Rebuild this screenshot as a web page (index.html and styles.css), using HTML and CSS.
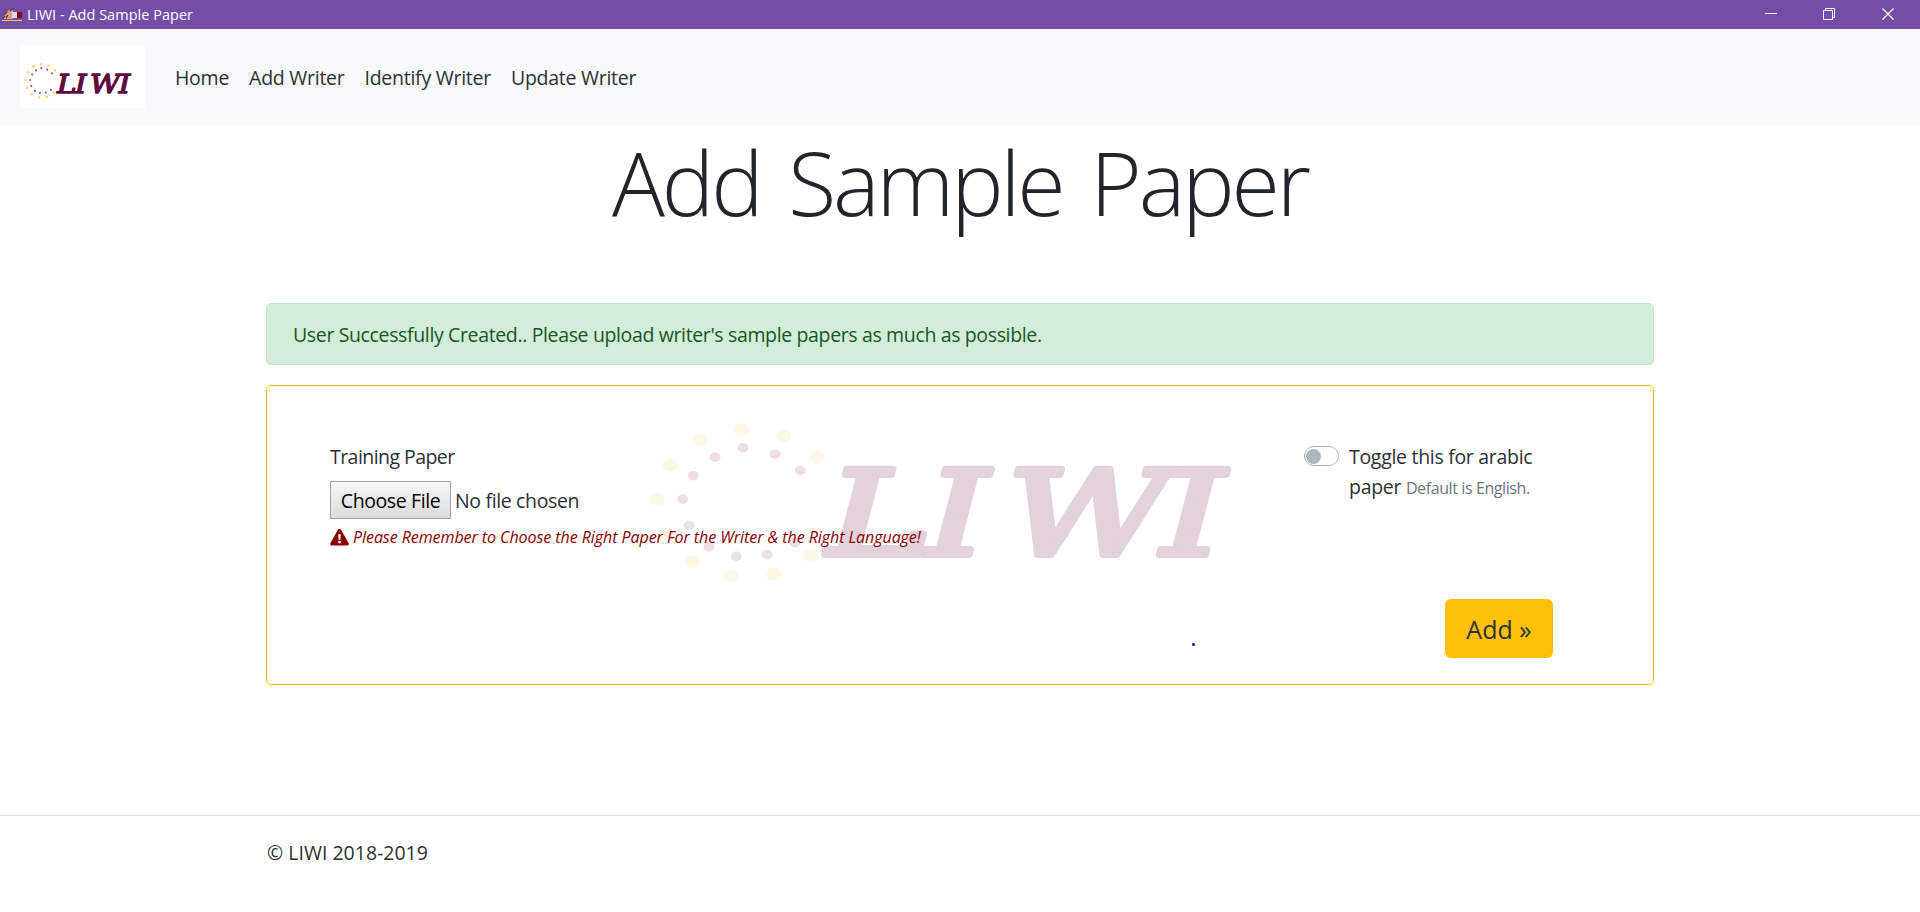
FILE: index.html
```html
<!DOCTYPE html>
<html lang="en">
<head>
<meta charset="utf-8">
<title>LIWI - Add Sample Paper</title>
<link rel="stylesheet" href="styles.css">
</head>
<body>
<header class="titlebar">
  <svg class="app-icon" width="20" height="14" viewBox="0 0 20 14">
    <path d="M1 9L4 5L7 2H11V11H2Z" fill="#e8a07c"/>
    <path d="M0 11L3 8M2 7L5 4M8 3L12 0M4 10L6 7" stroke="#4a4450" stroke-width="1.4"/>
    <path d="M10 4H15V10H10Z" fill="#dcd8ea"/>
    <path d="M15 4H20V10H15Z" fill="#7d0a12"/>
    <path d="M0 12H20V13H0Z" fill="#f5c842"/>
  </svg>
  <span class="window-title">LIWI - Add Sample Paper</span>
  <svg class="window-controls" width="150" height="29" viewBox="0 0 150 29" fill="none" stroke="#fff">
    <path d="M-5 13.500H7"/>
    <path d="M53.500 10.500H62.500V19.500H53.500ZM55.500 10.500V8.500H64.500V17.500H62.500"/>
    <path d="M112.500 8.500L123.500 19.500M123.500 8.500L112.500 19.500" stroke-width="1.200"/>
  </svg>
</header>

<nav class="navbar">
  <svg class="brand" viewBox="628 346 676 276" preserveAspectRatio="none"><use href="#liwi"/></svg>
  <a class="nav-link">Home</a>
  <a class="nav-link">Add Writer</a>
  <a class="nav-link">Identify Writer</a>
  <a class="nav-link">Update Writer</a>
</nav>

<h1 class="page-title"><span>Add Sample Paper</span></h1>

<main class="container">
  <div class="alert"><span>User Successfully Created.. Please upload writer's sample papers as much as possible.</span></div>

  <form class="card">
    <svg class="watermark" viewBox="640 410 600 190">
      <g id="liwi">
        <g fill="#fadd73">
          <ellipse cx="741.300" cy="429.700" rx="7.500" ry="6.200"/><ellipse cx="700.300" cy="440" rx="7.500" ry="6.200"/>
          <ellipse cx="670" cy="465.300" rx="7.500" ry="6.200"/><ellipse cx="657.300" cy="499.300" rx="7.500" ry="6.200"/>
          <ellipse cx="665.300" cy="534" rx="7.500" ry="6.200"/><ellipse cx="691.700" cy="561.700" rx="7.500" ry="6.200"/>
          <ellipse cx="730.700" cy="576" rx="7.500" ry="6.200"/><ellipse cx="773.700" cy="574" rx="7.500" ry="6.200"/>
          <ellipse cx="810.300" cy="555.700" rx="7.500" ry="6.200"/><ellipse cx="817.300" cy="457.700" rx="7.500" ry="6.200"/>
          <ellipse cx="783.700" cy="436" rx="7.500" ry="6.200"/>
        </g>
        <g fill="#ac4d74">
          <ellipse cx="743" cy="447.700" rx="5.500" ry="4.700"/><ellipse cx="715" cy="457.300" rx="5.500" ry="4.700"/>
          <ellipse cx="693.300" cy="475.700" rx="5.500" ry="4.700"/><ellipse cx="682.700" cy="499.300" rx="5.500" ry="4.700"/>
          <ellipse cx="689" cy="525.300" rx="5.500" ry="4.700"/><ellipse cx="709" cy="546.700" rx="5.500" ry="4.700"/>
          <ellipse cx="736.300" cy="556.300" rx="5.500" ry="4.700"/><ellipse cx="767.300" cy="554.700" rx="5.500" ry="4.700"/>
          <ellipse cx="795" cy="542.700" rx="5.500" ry="4.700"/><ellipse cx="800.300" cy="470.300" rx="5.500" ry="4.700"/>
          <ellipse cx="775.300" cy="454" rx="5.500" ry="4.700"/>
        </g>
        <text class="wordmark" transform="scale(1.35 1)" x="613 686 746 861" y="555">LIWI</text>
      </g>
    </svg>

    <div class="form-row">
      <div class="upload">
        <label class="field-label"><span>Training Paper</span></label>
        <div class="file-input">
          <button type="button" class="file-button"><span>Choose File</span></button>
          <span class="file-name">No file chosen</span>
        </div>
        <p class="warning">
          <svg width="19" height="17" viewBox="0 0 19 17"><path d="M9.500 0Q10.600 0 11.200 1L18.600 14.200Q19.400 16.300 17.500 16.500H1.500Q-.4 16.300.4 14.200L7.800 1Q8.400 0 9.500 0Z" fill="#8b0000"/><path d="M8.200 5.200H10.800L10.400 10.700H8.600Z" fill="#fff"/><circle cx="9.500" cy="13.100" r="1.400" fill="#fff"/></svg>
          <em>Please Remember to Choose the Right Paper For the Writer &amp; the Right Language!</em>
        </p>
      </div>
      <div class="language">
        <span class="switch"><i></i></span>
        <label class="switch-label">Toggle this for arabic<br>paper <small>Default is English.</small></label>
      </div>
    </div>
    <div class="actions">
      <i class="speck"></i>
      <button type="button" class="submit"><span>Add »</span></button>
    </div>
  </form>
</main>

<footer class="footer"><p>© LIWI 2018-2019</p></footer>
</body>
</html>
```
FILE: styles.css
```css
* { box-sizing: border-box; }
body {
  margin: 0;
  height: 912px;
  overflow: hidden;
  display: flex;
  flex-direction: column;
  background: #fff;
  color: #2c3035;
  font: 400 19.5px/30px "Open Sans", "Noto Sans", sans-serif;
  white-space: nowrap;
}
button { font: inherit; color: inherit; white-space: nowrap; }

.titlebar {
  flex: none;
  display: flex;
  align-items: center;
  height: 29px;
  padding-left: 2px;
  background: #744da9;
  color: #fff;
}
.app-icon { flex: none; margin-top: 1px; }
.window-title { margin-left: 5px; font-size: 14.5px; letter-spacing: .02px; line-height: 29px; }
.window-controls { margin-left: auto; overflow: visible; }

.navbar {
  flex: none;
  display: flex;
  align-items: center;
  height: 96px;
  padding: 0 0 2px 20px;
  background: #f8f9fa;
}
.brand { width: 125px; height: 63px; margin-right: 30px; background: #fff; }
.nav-link { margin-right: 20px; padding-top: 3px; letter-spacing: -.26px; }

.page-title {
  flex: none;
  height: 108px;
  margin: 3px 0 67px;
  text-align: center;
  color: #212529;
  font-size: 88px;
  font-weight: 300;
  line-height: 108px;
  letter-spacing: -3.1px;
  word-spacing: 8px;
}

.container { width: 1388px; margin: 0 auto; flex: none; }
.alert {
  height: 62px;
  padding: 16px 26px;
  border: 1px solid #c3e6cb;
  border-radius: 5px;
  background: #d4edda;
  color: #155724;
  letter-spacing: -.36px;
}
.card {
  position: relative;
  height: 300px;
  margin-top: 20px;
  padding: 55px 100px 26px 63px;
  border: 1px solid #ffc107;
  border-radius: 5px;
}
.watermark {
  position: absolute;
  left: 373px;
  top: 24px;
  width: 600px;
  height: 190px;
  opacity: .18;
}
.wordmark {
  font: italic 400 117px "DejaVu Serif", serif;
  fill: #5f0a3f;
  stroke: #5f0a3f;
  stroke-width: 6px;
  stroke-linejoin: round;
}
.form-row { position: relative; display: flex; justify-content: space-between; height: 158px; }
.field-label { display: block; height: 40px; padding-top: 1px; letter-spacing: -.55px; }
.file-input { display: flex; align-items: center; height: 38px; }
.file-button {
  width: 121px;
  height: 38px;
  padding: 2px 0 0;
  border: 1px solid #a0a0a0;
  background: linear-gradient(#f8f8f8, #dcdcdc);
  color: #000;
  letter-spacing: -.4px;
}
.file-name { margin-left: 4px; padding-top: 2px; letter-spacing: -.35px; }
.warning {
  display: flex;
  align-items: center;
  gap: 4px;
  height: 24px;
  margin: 6px 0 0;
  color: #8b0000;
  font-size: 16px;
  line-height: 24px;
  letter-spacing: -.06px;
}
.warning em { margin-top: -1px; }
.language { display: flex; width: 249px; }
.switch {
  flex: none;
  width: 35px;
  height: 20px;
  margin: 5px 10px 0 0;
  padding: 2px 1px;
  border: 1px solid #adb5bd;
  border-radius: 10px;
  background: #fff;
}
.switch i { display: block; width: 15px; height: 15px; border-radius: 50%; background: #adb5bd; }
.switch-label { padding-top: 1px; letter-spacing: -.3px; }
.switch-label small { color: #6c757d; font-size: 16px; letter-spacing: -.4px; }
.actions { display: flex; justify-content: flex-end; }
.speck { width: 3px; height: 3px; margin: 44px 250px 0 0; border-radius: 50%; background: #00f; }
.submit {
  width: 108px;
  height: 59px;
  padding: 1px 0 0;
  border: 0;
  border-radius: 6px;
  background: #ffc107;
  font-size: 25px;
}
.footer { flex: none; margin-top: 130px; padding: 22px 267px; border-top: 1px solid #e1e1e1; }
.footer p { margin: 0; }
```
